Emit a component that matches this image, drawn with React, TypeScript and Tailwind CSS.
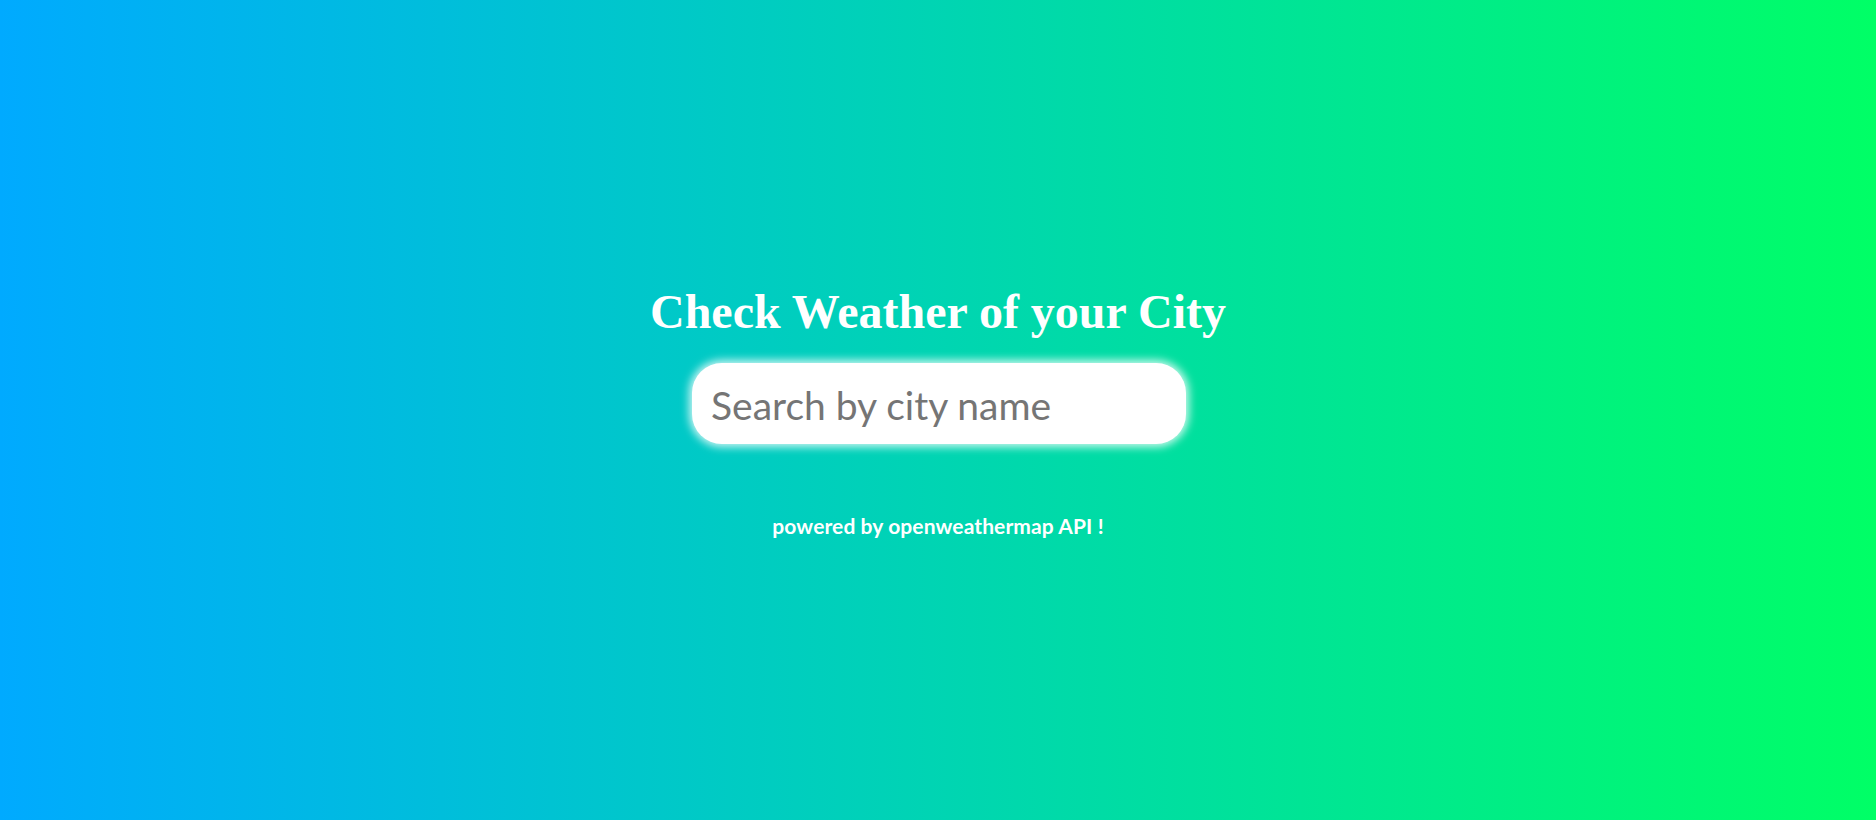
export default function App() {
  return (
    <div className="w-full h-[820px] bg-[linear-gradient(to_right,#00aaff,#00ff66)] flex flex-col items-center">
      <h1 className="mt-[284px] text-white font-bold text-[48px] leading-[56px] font-['Liberation_Serif',serif]">
        Check Weather of your City
      </h1>
      <input
        type="text"
        placeholder="Search by city name"
        className="mt-[23px] ml-[2px] w-[494px] h-[81px] rounded-[30px] bg-white px-[19px] pt-[2px] text-[39px] text-[#444] placeholder:text-[#757575] outline-none shadow-[0_0_8px_3px_rgba(255,255,255,0.8)] font-['Lato',sans-serif]"
      />
      <p className="mt-[69px] text-white font-bold text-[21px] leading-[26px] tracking-[0.1px] font-['Lato',sans-serif]">
        powered by openweathermap API !
      </p>
    </div>
  );
}
